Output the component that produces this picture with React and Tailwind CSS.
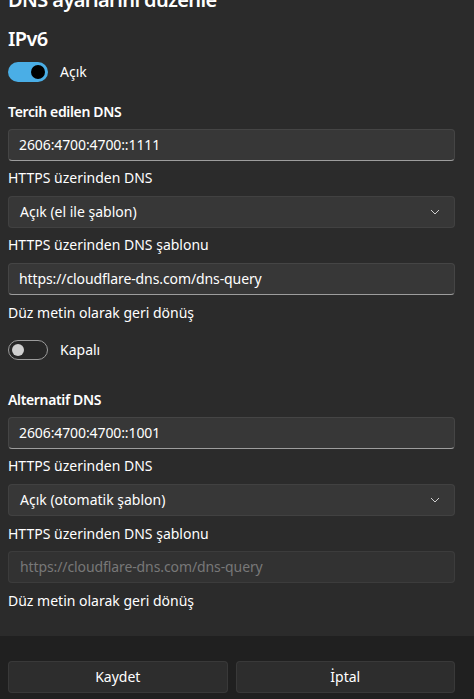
import React, { useState } from "react";

const Toggle = ({ on, onChange, label }) => (
  <div className="flex items-center gap-3 h-5">
    <button
      onClick={() => onChange(!on)}
      className={`relative w-10 h-5 rounded-full shrink-0 ${
        on ? "bg-[#4aaee6]" : "border border-[#9c9c9c] bg-[#272727]"
      }`}
    >
      {on ? (
        <span className="absolute right-[3px] top-[3px] w-[14px] h-[14px] rounded-full bg-black"></span>
      ) : (
        <span className="absolute left-[3px] top-[3px] w-3 h-3 rounded-full bg-[#cfcfcf]"></span>
      )}
    </button>
    <span className="text-sm leading-5">{label}</span>
  </div>
);

const TextBox = ({ value, disabled, className }) =>
  disabled ? (
    <div
      className={`h-8 rounded-[4px] border border-white/[0.05] bg-[#323232] pl-[11px] flex items-center text-[#787878] tracking-[-0.1px] ${className}`}
    >
      {value}
    </div>
  ) : (
    <div
      className={`h-8 rounded-[4px] border border-white/[0.07] border-b-[#9d9d9d] bg-[#373737] pl-[10px] flex items-center text-white tracking-[-0.1px] ${className}`}
    >
      {value}
    </div>
  );

const Combo = ({ value, className }) => (
  <div
    className={`h-8 rounded-[4px] border border-white/[0.05] bg-[#373737] pl-[11px] pr-[14px] flex items-center justify-between ${className}`}
  >
    <span>{value}</span>
    <svg width="10" height="6" viewBox="0 0 10 6" className="text-[#cfcfcf]">
      <polyline
        points="1,1 5,5 9,1"
        fill="none"
        stroke="currentColor"
        strokeWidth="1"
      />
    </svg>
  </div>
);

export default function App() {
  const [ipv6, setIpv6] = useState(true);
  const [fallback, setFallback] = useState(false);
  const url = "https://cloudflare-dns.com/dns-query";

  return (
    <div className="h-[699px] overflow-hidden bg-[#202020] text-white text-sm leading-5 font-['Segoe_UI','Noto_Sans',sans-serif] flex flex-col">
      <div className="h-[636px] shrink-0 overflow-hidden bg-[#2b2b2b] pl-2 pr-[19px]">
        {/* pane is scrolled a little, so the title runs off the top */}
        <div className="-mt-[14px]">
          <h1 className="text-xl leading-7 font-semibold tracking-[-0.6px]">
            DNS ayarlarını düzenle
          </h1>
          <h2 className="mt-[11px] text-xl leading-7 font-semibold tracking-[-0.6px]">
            IPv6
          </h2>
          <div className="mt-[9px]">
            <Toggle on={ipv6} onChange={setIpv6} label="Açık" />
          </div>

          <p className="mt-5 font-semibold tracking-[-0.35px]">Tercih edilen DNS</p>
          <TextBox value="2606:4700:4700::1111" className="mt-[7px]" />
          <p className="mt-[7px]">HTTPS üzerinden DNS</p>
          <Combo value="Açık (el ile şablon)" className="mt-2" />
          <p className="mt-[7px]">HTTPS üzerinden DNS şablonu</p>
          <TextBox value={url} className="mt-2" />
          <p className="mt-2">Düz metin olarak geri dönüş</p>
          <div className="mt-[17px]">
            <Toggle on={fallback} onChange={setFallback} label="Kapalı" />
          </div>

          <p className="mt-[30px] font-semibold tracking-[-0.35px]">Alternatif DNS</p>
          <TextBox value="2606:4700:4700::1001" className="mt-[7px]" />
          <p className="mt-[7px]">HTTPS üzerinden DNS</p>
          <Combo value="Açık (otomatik şablon)" className="mt-2" />
          <p className="mt-2">HTTPS üzerinden DNS şablonu</p>
          <TextBox value={url} disabled className="mt-[7px]" />
          <p className="mt-2">Düz metin olarak geri dönüş</p>
        </div>
      </div>

      <div className="flex gap-2 pl-2 pr-[19px] pt-[25px]">
        <button className="flex-1 h-8 rounded-[4px] border border-white/[0.06] bg-[#2d2d2d] text-white">
          Kaydet
        </button>
        <button className="flex-1 h-8 rounded-[4px] border border-white/[0.06] bg-[#2d2d2d] text-white">
          İptal
        </button>
      </div>
    </div>
  );
}
